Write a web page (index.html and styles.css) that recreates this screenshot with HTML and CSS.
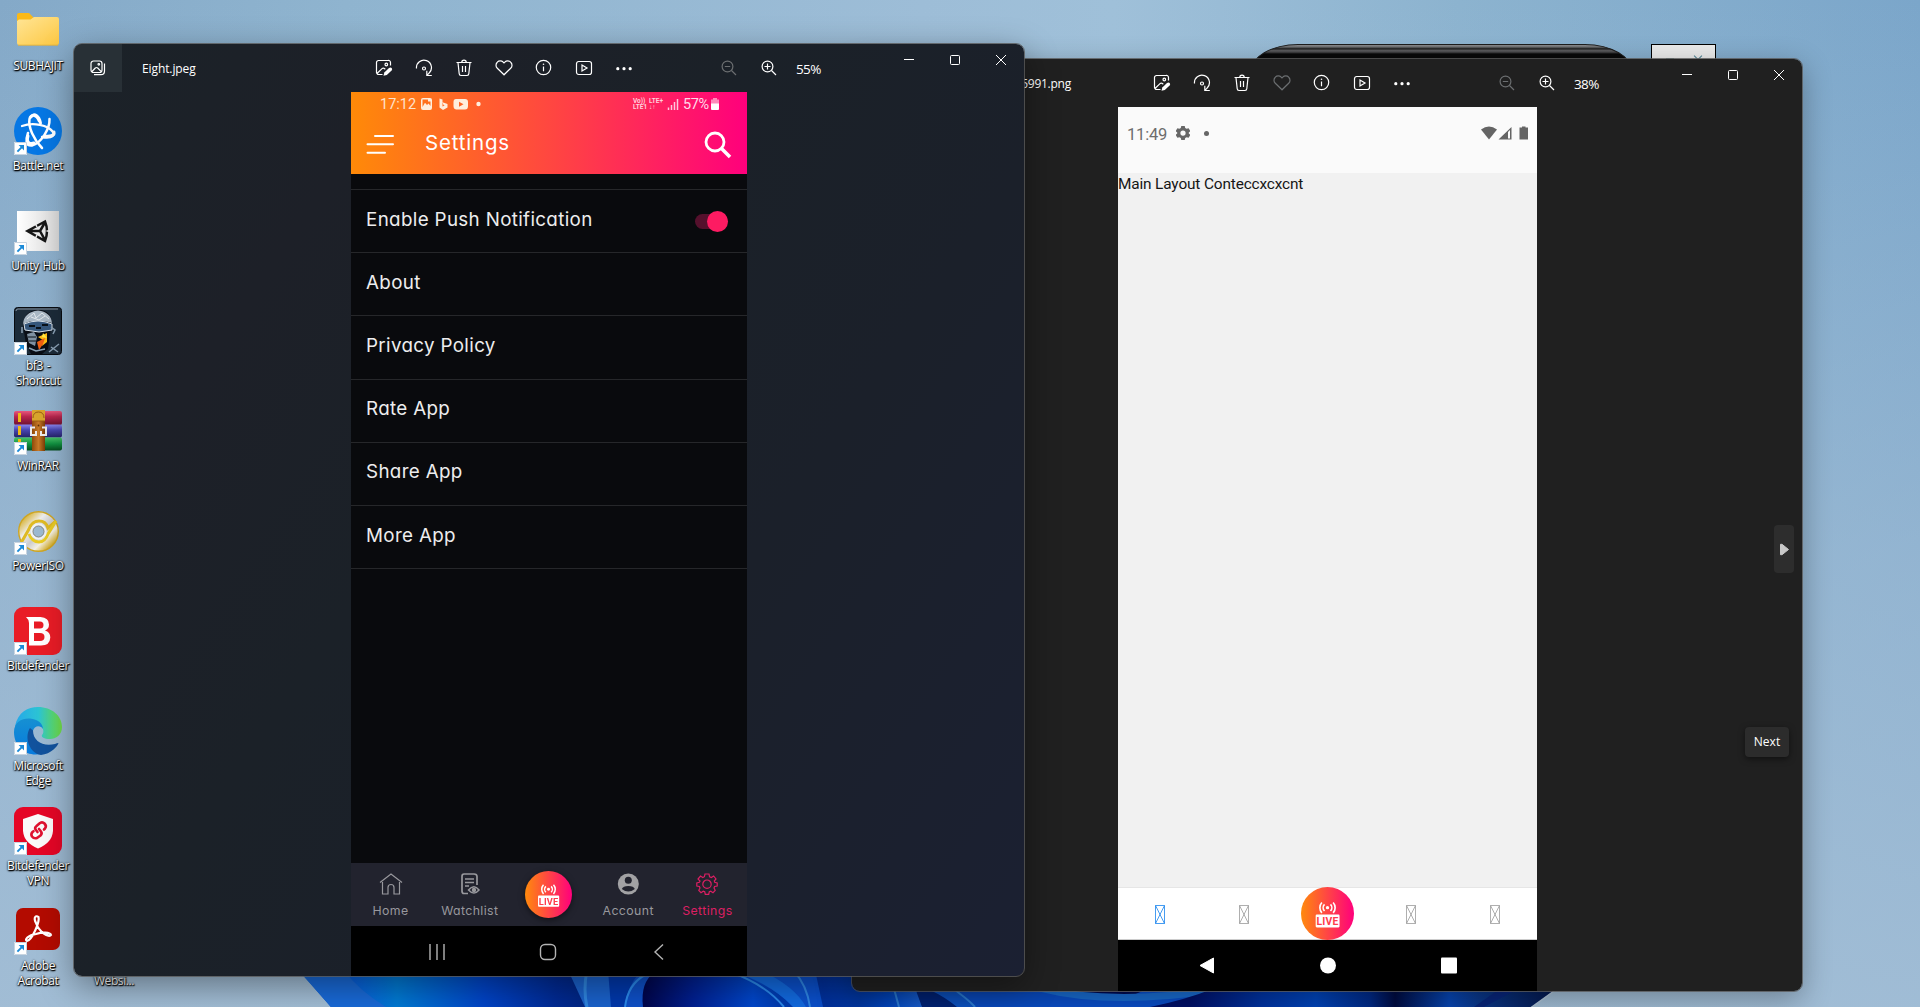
FILE: index.html
```html
<!DOCTYPE html>
<html lang="en">
<head>
<meta charset="utf-8">
<title>Desktop</title>
<link rel="stylesheet" href="styles.css">
</head>
<body>
<svg class="defs" width="0" height="0" aria-hidden="true">
  <defs>
    <linearGradient id="hot" x1="0" x2="1" y1="0" y2="0"><stop offset="0" stop-color="#ff8a0c"/><stop offset=".5" stop-color="#ff4545"/><stop offset="1" stop-color="#ff007c"/></linearGradient>
    <symbol id="shortcut" viewBox="0 0 13 13"><path d="M0 0h13v13H0z" fill="#fff"/><path d="M.5.5h12v12H.5z" fill="none" stroke="#c8d4e0"/><path d="M3.4 9.6 8.6 4.4" stroke="#1b8ad8" stroke-width="2"/><path d="M4.6 3h5.4v5.4L8.2 6.6 6.4 4.8z" fill="#1b8ad8"/></symbol>
    <symbol id="edit" viewBox="0 0 18 18"><path d="M7.5 15.5H4A2.2 2.2 0 0 1 1.500 13.500V3.500A2 2 0 0 1 3.500 1.500H13A2 2 0 0 1 15.500 3.500V6.500M2 14.500 7 9.600Q8.200 8.600 9.500 9.600L10.300 10.300"/><circle cx="11.300" cy="5.500" r="1.300"/><path d="M8.500 16.700 9.300 13.600 14 9Q15.500 7.800 16.700 9Q17.700 10.300 16.600 11.500L11.800 16.100z" fill="currentColor" stroke="none"/></symbol>
    <symbol id="rotate" viewBox="0 0 18 18"><path d="M1.500 9.500A7.500 7.500 0 1 1 14 14.200L12 16.300M11.800 11.700V16.500H16.800"/><circle cx="9" cy="9.500" r="1.500"/></symbol>
    <symbol id="trash" viewBox="0 0 18 18"><path d="M1.500 3.500H16.500M6.800 3.300A2.200 2.200 0 0 1 11.200 3.300M3 3.800 4.200 14.800A1.800 1.800 0 0 0 6 16.500H12A1.800 1.800 0 0 0 13.800 14.800L15 3.800M7.500 7V13M10.500 7V13"/></symbol>
    <symbol id="heart" viewBox="0 0 18 18"><path d="M9 15.800 2.300 9.200A4.100 4.100 0 0 1 2.300 3.200A4.100 4.100 0 0 1 8.200 3.200L9 4 9.800 3.200A4.100 4.100 0 0 1 15.700 3.200A4.100 4.100 0 0 1 15.700 9.200z"/></symbol>
    <symbol id="info" viewBox="0 0 18 18"><circle cx="8.500" cy="8.500" r="7.200"/><path d="M8.500 7.500V12.200"/><circle cx="8.500" cy="5.200" r=".8" fill="currentColor" stroke="none"/></symbol>
    <symbol id="play" viewBox="0 0 18 18"><rect x="1.500" y="2.500" width="15" height="13" rx="2.200"/><path d="M7 6V12L12 9z"/></symbol>
    <symbol id="more" viewBox="0 0 18 18"><g fill="currentColor" stroke="none"><circle cx="2.800" cy="9.700" r="1.600"/><circle cx="9" cy="9.700" r="1.600"/><circle cx="15.200" cy="9.700" r="1.600"/></g></symbol>
    <symbol id="zoomout" viewBox="0 0 18 18"><circle cx="7.500" cy="7.500" r="5.400"/><path d="M11.500 11.500 16 16M4.800 7.500H10.200"/></symbol>
    <symbol id="zoomin" viewBox="0 0 18 18"><circle cx="7.500" cy="7.500" r="5.400"/><path d="M11.500 11.500 16 16M4.500 7.500H10.500M7.500 4.500V10.500"/></symbol>
    <symbol id="min" viewBox="0 0 12 12"><path d="M1 5.500H11"/></symbol>
    <symbol id="max" viewBox="0 0 12 12"><rect x="1.500" y="1.500" width="9" height="9" rx="1"/></symbol>
    <symbol id="close" viewBox="0 0 12 12"><path d="M1 1 11 11M11 1 1 11"/></symbol>
    <symbol id="live" viewBox="0 0 48 48"><circle cx="24" cy="24" r="24" fill="url(#hot)"/><g fill="none" stroke="#fff" stroke-width="1.500"><path d="M21.300 15.700A4.300 4.300 0 0 0 21.300 21.700M26.700 15.700A4.300 4.300 0 0 1 26.700 21.700M18.900 14A7 7 0 0 0 18.900 23.400M29.100 14A7 7 0 0 1 29.100 23.400"/></g><circle cx="24" cy="18.700" r="1.500" fill="#fff"/><rect x="13.300" y="25" width="21.600" height="11.600" rx="1" fill="#fff"/><text x="24.100" y="34.300" class="live-word">LIVE</text></symbol>
    <symbol id="tofu" viewBox="0 0 10 19"><path d="M.5.500H9.500V18.500H.5zM.5.500 9.500 18.500M9.500.500.500 18.500"/></symbol>
  </defs>
</svg>

<svg class="wallpaper" viewBox="0 970 1920 37" aria-hidden="true">
  <defs>
    <linearGradient id="w1" gradientUnits="userSpaceOnUse" x1="310" x2="600" y1="0" y2="0"><stop offset="0" stop-color="#1f70dc"/><stop offset=".15" stop-color="#0860dc"/><stop offset=".3" stop-color="#007ad4"/><stop offset=".6" stop-color="#0044c8"/><stop offset=".85" stop-color="#002a94"/><stop offset="1" stop-color="#00247c"/></linearGradient>
    <linearGradient id="w2" gradientUnits="userSpaceOnUse" x1="645" x2="780" y1="0" y2="0"><stop offset="0" stop-color="#00064e"/><stop offset=".35" stop-color="#001f90"/><stop offset=".8" stop-color="#0047cc"/><stop offset="1" stop-color="#003bb0"/></linearGradient>
    <linearGradient id="w3" gradientUnits="userSpaceOnUse" x1="815" x2="925" y1="0" y2="0"><stop offset="0" stop-color="#002e98"/><stop offset=".4" stop-color="#0039a8"/><stop offset=".65" stop-color="#0048c8"/><stop offset="1" stop-color="#1b66dc"/></linearGradient>
    <linearGradient id="w4" gradientUnits="userSpaceOnUse" x1="1190" x2="1550" y1="0" y2="0"><stop offset="0" stop-color="#001068"/><stop offset=".2" stop-color="#0034a4"/><stop offset=".35" stop-color="#0045bc"/><stop offset=".5" stop-color="#002a88"/><stop offset=".57" stop-color="#000c42"/><stop offset=".72" stop-color="#0746b4"/><stop offset=".8" stop-color="#0a388c"/><stop offset="1" stop-color="#041a50"/></linearGradient>
  </defs>
  <path d="M298 970 304 976 331 1007H1532L1553 991V970z" fill="#0a4fcb"/>
  <path d="M298 970 331 1007H620V970z" fill="url(#w1)"/>
  <path d="M298 970 304 976 331 1007H386Q358 990 344 970z" fill="#196ad8"/>
  <path d="M568 970 585 1007H625V970z" fill="#1a62cc"/>
  <path d="M587 970Q583 990 587 1007" fill="none" stroke="#2f86e0" stroke-width="3"/>
  <path d="M608 970 611 1007H632L648 970z" fill="#0038ac"/>
  <path d="M625 1007Q628 976 660 970H725Q765 980 795 1007z" fill="url(#w2)"/>
  <path d="M643 1007Q640 982 655 972H640Q626 988 625 1007z" fill="#0e50c8"/>
  <path d="M625 1007Q628 984 645 975" fill="none" stroke="#2b8aec" stroke-width="2"/>
  <path d="M728 970Q770 982 793 1007H808Q790 982 765 970z" fill="#126ae0"/>
  <path d="M730 972Q765 984 784 1007" fill="none" stroke="#2b8aec" stroke-width="2"/>
  <path d="M760 970Q795 986 806 1007H818Q815 980 810 970z" fill="#0b50cc"/>
  <path d="M793 970Q807 985 810 1007" fill="none" stroke="#2f86e4" stroke-width="2"/>
  <path d="M815 970 823 1007H933L915 970z" fill="url(#w3)"/>
  <path d="M893 985 899 1007" stroke="#2f86e4" stroke-width="2"/>
  <path d="M914 985 922 1007H974Q962 993 948 985z" fill="#00257e"/>
  <path d="M930 990Q945 997 957 1007H976Q964 995 952 988z" fill="#0d58cf"/>
  <path d="M948 985Q968 999 975 1007" fill="none" stroke="#2f86e4" stroke-width="2"/>
  <path d="M1060 985Q1080 998 1115 998Q1140 996 1150 985z" fill="#000a50"/>
  <path d="M1040 988Q1110 1006 1215 990" fill="none" stroke="#196dd2" stroke-width="7"/>
  <path d="M1150 1007Q1185 1000 1215 988H1553V991L1532 1007z" fill="url(#w4)"/>
  <path d="M1484 1007 1520 988H1501L1474 1007z" fill="#08267c"/>
  <path d="M1531 1007.500 1554 991" stroke="#b2c6d8" stroke-width="1.500"/>
</svg>

<div class="mock-phone"></div>
<div class="mock-note"><span></span><i></i></div>

<nav class="icons">
  <div class="cell"><svg viewBox="0 0 48 48"><defs><linearGradient id="fo" x2="1" y2="1"><stop stop-color="#ffe596"/><stop offset="1" stop-color="#fdc842"/></linearGradient></defs><path d="M3 8Q3 6 5 6H15L19 10V17H3z" fill="#fbb917"/><path d="M5 12.500H16.500L20 10H43Q45 10 45 12V36Q45 38 43 38H5Q3 38 3 36V14z" fill="url(#fo)"/><path d="M4 38.200H44" stroke="#e6b43c"/></svg><p>SUBHAJIT</p></div>
  <div class="cell"><svg viewBox="0 0 48 48"><circle cx="24" cy="24" r="24" fill="#0677e4"/><g fill="none" stroke="#fff" stroke-linecap="round"><path d="M28 41C20 33 14 20 15.500 12C16.500 7 22 7 25 14" stroke-width="2.500"/><path d="M17 10C20 5 25 9 26.500 16" stroke-width="3"/><path d="M8 19C19 15 34 18 39 25C42 31 33 31 28 30" stroke-width="2.300"/><path d="M40 25C41 29 35 29.500 31 29" stroke-width="3"/><path d="M35.500 12C36 22 27 36 18 38.500C11 39 12 32 14 26" stroke-width="2.500"/><path d="M14 29C12 36 16 37.500 20 36" stroke-width="3"/></g><use href="#shortcut" y="35" width="13" height="13"/></svg><p>Battle.net</p></div>
  <div class="cell"><svg viewBox="0 0 48 48"><defs><linearGradient id="un"><stop stop-color="#fff"/><stop offset="1" stop-color="#d8d8d8"/></linearGradient></defs><path d="M3 4H45V44H3z" fill="url(#un)"/><path d="M31 14.500 13.500 24 31 34Q35 24 31 14.500zM14 24H26M26 24 31.500 14.500M26 24 31.500 34" fill="none" stroke="#161616" stroke-width="2.500"/><path d="M21 16 23 20M21 32 23 28M32.500 24H36" stroke="#eee" stroke-width="1.500"/><use href="#shortcut" y="35" width="13" height="13"/></svg><p>Unity Hub</p></div>
  <div class="cell"><svg viewBox="0 0 48 48"><rect x=".5" y=".5" width="47" height="47" rx="3" fill="#1c2b39" stroke="#080b10"/><path d="M2 4Q2 2 4 2H44" stroke="#8794a2" fill="none"/><path d="M9 19Q10 3 24 3Q38 3 38 18L36 27 34 42 28 47H17L12 37 10 25z" fill="#090d15"/><path d="M9 17Q10 5 24 3.500Q37 5 38 16L30 14H17z" fill="#a9b7c4"/><path d="M13 12 20 6 22 11 28 6 35 12M17 10 25 13 31 9" fill="none" stroke="#e3e8ed"/><path d="M10 17Q24 11 38 17V23L25 25 11 23z" fill="#35567b" stroke="#d5dfe9"/><path d="M15 19H21M28 18H34M22 21H27" stroke="#0a1119" stroke-width="2"/><path d="M13 27 20 25 23 30 21 39 15 36z" fill="#7f91a2"/><path d="M14 30H22M15 34H22M17 40H28" stroke="#0b1119"/><path d="M24 30 33 26 33 35 28 39 29 33z" fill="#ffbc15"/><path d="M23 35 31 31 29 37 25 43z" fill="#f05e12"/><path d="M29 26 33 31 28 30z" fill="#ffed47"/><path d="M8 20V26M37 20 41 23 39 27M15 41 22 44 31 42M35 45 45 37M37 40 44 45" stroke="#8aa0b4" stroke-width="1.500" fill="none"/><use href="#shortcut" y="35" width="13" height="13"/></svg><p>bf3 -<br>Shortcut</p></div>
  <div class="cell"><svg viewBox="0 0 48 48"><defs><linearGradient id="r1" x2="0" y2="1"><stop stop-color="#e8577c"/><stop offset=".4" stop-color="#b8264e"/><stop offset="1" stop-color="#6e1230"/></linearGradient><linearGradient id="r2" x2="0" y2="1"><stop stop-color="#8c86ee"/><stop offset=".4" stop-color="#4a48b4"/><stop offset="1" stop-color="#252268"/></linearGradient><linearGradient id="r3" x2="0" y2="1"><stop stop-color="#46c266"/><stop offset=".5" stop-color="#109040"/><stop offset="1" stop-color="#064c1e"/></linearGradient><linearGradient id="r4"><stop stop-color="#8f4a0a"/><stop offset=".5" stop-color="#c87a28"/><stop offset="1" stop-color="#7c3c06"/></linearGradient></defs><rect y="4" width="48" height="14" rx="2" fill="url(#r1)"/><rect y="17.500" width="48" height="13" rx="2" fill="url(#r2)"/><rect y="30.500" width="48" height="13" rx="2" fill="url(#r3)"/><path d="M4 6H7V15H4zM4 19H7V28H4zM4 32H7V35H4z" fill="#eeb913"/><path d="M18 3H31V44H18z" fill="url(#r4)"/><path d="M18 14V3H31V14z" fill="#d9a52c"/><path d="M19 11Q19 5 24.500 5Q30 5 30 11M18 14H31" fill="none" stroke="#9a5b14"/><path d="M21 20.500H17V28H22V24M28 20.500H32V28H27V24" fill="none" stroke="#ececec" stroke-width="2"/><circle cx="24.500" cy="18.500" r=".9" fill="#5a2c05"/><use href="#shortcut" y="35" width="13" height="13"/></svg><p>WinRAR</p></div>
  <div class="cell"><svg viewBox="0 0 48 48"><defs><linearGradient id="cd" x2="1" y2="1"><stop stop-color="#d9b53b"/><stop offset=".3" stop-color="#eee"/><stop offset=".55" stop-color="#ccc"/><stop offset=".75" stop-color="#f4f0e4"/><stop offset="1" stop-color="#d0a81e"/></linearGradient></defs><circle cx="24.500" cy="24.500" r="14" fill="none" stroke="url(#cd)" stroke-width="12"/><circle cx="24.500" cy="24.500" r="19.800" fill="none" stroke="#cda524" stroke-width="1.400"/><path d="M7 36 15 22Q18 14 25 14Q32 14 34 21L42 14" fill="none" stroke="#dfba23" stroke-width="3"/><path d="M15 27Q18 35 25 35Q31 35 34 27L42 14" fill="none" stroke="#e9cb23" stroke-width="3"/><circle cx="24.500" cy="24.500" r="7" fill="none" stroke="#f2f3f3" stroke-width="2.500"/><circle cx="24.500" cy="24.500" r="5.500" fill="#9cb9d1" stroke="#8b8b86"/><use href="#shortcut" y="35" width="13" height="13"/></svg><p>PowerISO</p></div>
  <div class="cell"><svg viewBox="0 0 48 48"><rect width="48" height="48" rx="9" fill="#e91c26"/><path fill="#fff" fill-rule="evenodd" d="M12 10H26.500Q35 10.500 35 17.500Q35 22 31 23.600Q36.300 25 36.300 30.500Q36 38.500 27 38.500H15V16Q14.500 12 12 10zM20 14.500V21.500H26Q29.500 21.500 29.500 18Q29.500 14.500 26 14.500zM20 26V34H26Q30.500 34 30.500 30Q30.500 26 26 26z"/><use href="#shortcut" y="35" width="13" height="13"/></svg><p>Bitdefender</p></div>
  <div class="cell"><svg viewBox="0 0 48 48"><defs><linearGradient id="e1"><stop stop-color="#24a7ea"/><stop offset=".5" stop-color="#2cc4d4"/><stop offset=".8" stop-color="#55d778"/><stop offset="1" stop-color="#72dc45"/></linearGradient><linearGradient id="e2" x2="0" y2="1"><stop stop-color="#1690d2"/><stop offset="1" stop-color="#067ade"/></linearGradient></defs><path d="M1 19C4 5 14 0 24 0C38 0 48 9 48 20C48 28 42 32 36 32C30 32 27 30 28 28C31 25 29 19 24 18z" fill="url(#e1)"/><path d="M0 25C0 15 8 11 16 11.500C24 12 29 17 29 22C27 18 20 18 19 24C17 32 24 45 34 44C19 53 0 44 0 25z" fill="url(#e2)"/><path d="M16 21C10 30 15 46 27 48C37 47 44 39 44.500 36Q43 36 41 37C29 40 19 34 19 23.500z" fill="#11529d"/><use href="#shortcut" y="35" width="13" height="13"/></svg><p>Microsoft<br>Edge</p></div>
  <div class="cell"><svg viewBox="0 0 48 48"><rect width="48" height="48" rx="9" fill="#e50626"/><path d="M24 7 39 12V24Q38 36 24 41.500Q10 36 9 24V12z" fill="#fafafa"/><g fill="none" stroke="#df1230" stroke-width="2.600" stroke-linecap="round" stroke-linejoin="round"><path d="M23.500 25 21.500 22.500Q20.500 20.500 22.500 19L26 16Q28.500 14.500 30.500 16.500Q33 19 31 21.500L30 22.500"/><path d="M25 22 27 24.500Q28.500 26.500 26.500 28.500L23 31Q20 32 18 29.500Q16.500 27 18.500 25L19.500 24.200"/></g><use href="#shortcut" y="35" width="13" height="13"/></svg><p>Bitdefender<br>VPN</p></div>
  <div class="cell"><svg viewBox="0 0 48 48"><rect x="2" y="1" width="44" height="42" rx="7" fill="#b30b00"/><path d="M22 16C19 10 22 8 24.500 10C26 15 18 33 13 34C10 33 14 28 22 27C28 25 36 25 37 28C35 31 25 25 22 16z" fill="none" stroke="#fff" stroke-width="2.200"/><use href="#shortcut" y="35" width="13" height="13"/></svg><p>Adobe<br>Acrobat</p></div>
</nav>
<p class="stray">Websi...</p>

<section class="window back">
  <header class="titlebar">
    <span class="home"></span><span class="name">5991.png</span>
    <div class="tools"><svg><use href="#edit"/></svg><svg><use href="#rotate"/></svg><svg><use href="#trash"/></svg><svg class="off"><use href="#heart"/></svg><svg><use href="#info"/></svg><svg><use href="#play"/></svg><svg><use href="#more"/></svg></div>
    <div class="zooms"><svg class="off"><use href="#zoomout"/></svg><svg><use href="#zoomin"/></svg><span>38%</span></div>
    <div class="controls"><svg><use href="#min"/></svg><svg><use href="#max"/></svg><svg><use href="#close"/></svg></div>
  </header>
  <main class="phone android">
    <div class="status"><time>11:49</time>
      <svg class="gear" width="14" height="14" viewBox="0 0 24 24" fill="#666"><path fill-rule="evenodd" d="M9 0h6l.8 3.500 2.400 1.400 3.400-1.100 3 5-2.700 2.400v1.600l2.700 2.400-3 5-3.400-1.100-2.400 1.400L15 24H9l-.8-3.500-2.400-1.400-3.400 1.100-3-5 2.700-2.400v-1.600L-.6 8.800l3-5 3.400 1.100 2.400-1.400zM12 7.500a4.500 4.500 0 1 0 0 9 4.500 4.500 0 0 0 0-9z"/></svg><i class="dot"></i>
      <svg class="signals" width="48" height="14" viewBox="0 0 48 14" fill="#646464"><path d="M0 3.500Q8-2.500 16 3.500L8 13.500z"/><path d="M17.500 13.500 30.500 1V13.500zM27 6V12.500H29V4z" fill-rule="evenodd"/><path d="M38.500 1.500H41V.5H44.500V1.500H47V13.500H38.500z"/></svg>
    </div>
    <div class="content">Main Layout Conteccxcxcnt</div>
    <div class="tabs"><svg class="tofu on"><use href="#tofu"/></svg><svg class="tofu"><use href="#tofu"/></svg><svg class="live"><use href="#live"/></svg><svg class="tofu"><use href="#tofu"/></svg><svg class="tofu"><use href="#tofu"/></svg></div>
    <div class="sysnav"><svg viewBox="0 0 16 17"><path d="M14.500 1V16L1 8.500z" fill="#fff" stroke="#fff" stroke-linejoin="round"/></svg><svg viewBox="0 0 16 17"><circle cx="8" cy="8.500" r="8" fill="#fff"/></svg><svg viewBox="0 0 16 17"><rect y=".5" width="16" height="16" rx="1" fill="#fff"/></svg></div>
  </main>
  <div class="next"><svg width="11" height="13" viewBox="0 0 11 13"><path d="M1.500 1.300V11.700H3L9.500 6.500 3 1.300z" fill="#c8c8c8" stroke="#c8c8c8" stroke-linejoin="round"/></svg></div>
  <div class="tip">Next</div>
</section>

<section class="window front">
  <header class="titlebar">
    <span class="home"><svg width="18" height="18" viewBox="0 0 18 18"><rect x="2" y="2" width="11" height="11.500" rx="2.500"/><path d="M3 12.500 6.300 9Q7.500 8 8.700 9L12.500 12.800M15.500 4.500V12Q15.500 15.700 12 15.700H5"/><circle cx="9.800" cy="5.300" r=".8"/></svg></span><span class="name">Eight.jpeg</span>
    <div class="tools"><svg><use href="#edit"/></svg><svg><use href="#rotate"/></svg><svg><use href="#trash"/></svg><svg><use href="#heart"/></svg><svg><use href="#info"/></svg><svg><use href="#play"/></svg><svg><use href="#more"/></svg></div>
    <div class="zooms"><svg class="off"><use href="#zoomout"/></svg><svg><use href="#zoomin"/></svg><span>55%</span></div>
    <div class="controls"><svg><use href="#min"/></svg><svg><use href="#max"/></svg><svg><use href="#close"/></svg></div>
  </header>
  <main class="phone app">
    <div class="hero">
      <div class="status"><time>17:12</time>
        <svg width="64" height="14" viewBox="0 0 64 14"><path fill="#ffeede" fill-rule="evenodd" d="M4 1H11Q13 1 13 3V11Q13 13 11 13H4Q2 13 2 11V3Q2 1 4 1zM3.500 10 6 5.800 8 8 9.500 6.500 11.500 9V4.500H9V2.500H3.500zM20.500 1.500V10.500L24 13 28.500 10.500V7L23.500 5.300 24.500 8 25.700 8.500 23.500 9.500V2.500zM37 2H46Q49 2 49 5V9Q49 12.500 46 12.500H37Q34.500 12 34.500 9V5Q34.500 2 37 2zM40 4.700V9.700L44.500 7.200z"/><circle cx="59.500" cy="7" r="2.200" fill="#ffeede"/></svg>
        <span class="lte"><b>Vo))</b><b>LTE+</b><b>LTE1</b><b>&#8595;&#8593;</b></span>
        <svg class="bars" width="12" height="12" viewBox="0 0 12 12"><path d="M1.500 9.500V12M4.500 7V12M7.500 4V12M10.500 1V12" stroke="#ffc8dc" stroke-width="1.500"/></svg>
        <span class="pct">57%</span>
        <svg class="batt" width="8" height="12" viewBox="0 0 8 12"><path d="M2 0H6V1.500H8V6H0V1.500H2z" fill="#ff8abb"/><path d="M0 5.500H8V11Q8 12 7 12H1Q0 12 0 11z" fill="#fff"/></svg>
      </div>
      <div class="appbar"><svg class="menu" width="28" height="22" viewBox="0 0 28 22"><path d="M9 3H27M1.500 11.300H27M1.500 19.700H19" stroke="#fff" stroke-width="2" stroke-linecap="round"/></svg><h1>Settings</h1><svg class="search" width="28" height="28" viewBox="0 0 28 28"><circle cx="11" cy="11" r="9" fill="none" stroke="#fff" stroke-width="2.800"/><path d="M17.500 17.500 26 26" stroke="#fff" stroke-width="3.600"/></svg></div>
    </div>
    <ul><li>Enable Push Notification<span class="toggle"><i></i></span></li><li>About</li><li>Privacy Policy</li><li>Rate App</li><li>Share App</li><li>More App</li></ul>
    <div class="tabs">
      <div><svg width="24" height="22" viewBox="0 0 24 22"><path d="M1 9.500 12 1 23 9.500M3.500 9V21H9V14.500A3 3 0 0 1 15 14.500V21H20.500V9"/></svg>Home</div>
      <div><svg width="22" height="22" viewBox="0 0 22 22"><path d="M9 20.500H5Q3 20.500 3 18V3.500Q3 1 5 1H15Q18 1 18 3.500V12" stroke-width="1.700"/><path d="M6 6H15M6 9.500H15M6 13H10" stroke-width="1.500"/><path d="M9.500 17Q15 10.500 20 17Q15 23 9.500 17z" fill="#22232e" stroke-width="1.500"/><circle cx="15" cy="17" r="1.600" fill="#999"/></svg>Watchlist</div>
      <div class="center"><svg class="live"><use href="#live"/></svg></div>
      <div><svg width="22" height="22" viewBox="0 0 22 22"><circle cx="11.300" cy="11" r="10.500" fill="#a2a2a4" stroke="none"/><circle cx="11.300" cy="7.300" r="3.500" fill="#22232e" stroke="none"/><path d="M4.800 16Q6 13 11.300 13Q16.800 13 17.800 16Q11.300 21 4.800 16z" fill="#22232e" stroke="none"/></svg>Account</div>
      <div class="on"><svg width="22" height="22" viewBox="0 0 22 22"><path d="M9 1H13L13.600 3.700 15.400 4.500 17.600 3 20 6 18.300 8 18.700 9.300 21.200 10V13L18.600 13.500 18 15 19.200 17.300 17 19.700 14.800 18.200 13.300 18.800 12.700 21.300H9.300L8.700 18.800 7.200 18.200 5 19.700 2.800 17.300 4 15 3.400 13.500.8 13V10L3.300 9.300 4 8 2 6 4.500 3 6.800 4.500 8.400 3.700z"/><circle cx="11" cy="11.200" r="4.200"/></svg>Settings</div>
    </div>
    <div class="sysnav"><svg viewBox="0 0 18 18"><path d="M2 1V17M9 1V17M16 1V17"/></svg><svg viewBox="0 0 18 18"><rect x="1.500" y="1.500" width="15" height="15" rx="4.500"/></svg><svg viewBox="0 0 18 18"><path d="M13 1.500 5 9 13 16.500"/></svg></div>
  </main>
</section>
</body>
</html>
```

FILE: styles.css
```css
* { box-sizing: border-box; }
body {
  margin: 0; width: 1920px; height: 1007px; position: relative; overflow: hidden;
  font-family: "Open Sans", "Noto Sans", sans-serif; color: #fff;
  background:
    linear-gradient(180deg, rgba(166,192,215,0) 0%, rgba(166,192,215,.55) 55%, rgba(166,192,215,.85) 100%),
    linear-gradient(90deg, #84a9c8 0%, #8fb4cf 18%, #9dbdd7 48%, #9fc0d9 58%, #8cb3cf 76%, #7ba6ca 100%);
}
p, h1, ul { margin: 0; padding: 0; }
.defs { position: absolute; }
.live-word { font: 700 9.400px "Roboto", sans-serif; fill: #ff3c4c; text-anchor: middle; letter-spacing: .2px; }

.wallpaper { position: absolute; left: 0; top: 970px; width: 1920px; height: 37px; }
.mock-phone {
  position: absolute; left: 1250px; top: 44px; width: 383px; height: 60px;
  border-radius: 48px 48px 0 0 / 28px 28px 0 0; border: 1px solid #1d1d1d;
  background: linear-gradient(180deg, #8b8c8e 0, #6a6b6d 2px, #161616 4px, #5d5d5f 5px, #4a4a4c 7px, #080808 9px);
}
.mock-note {
  position: absolute; left: 1651px; top: 44px; width: 65px; height: 40px; padding: 10px 14px;
  border: 1px solid #000; background: #ebebeb; display: flex; justify-content: space-between;
}
.mock-note span { width: 8px; height: 2px; margin-top: 3px; background: #8aa; }
.mock-note i { width: 6px; height: 6px; border-bottom: 1px solid #4b8294; border-right: 1px solid #4b8294; transform: translateY(-2px) rotate(45deg); }

.icons { position: absolute; left: 0; top: 7px; width: 76px; display: grid; grid-auto-rows: 100px; }
.cell { display: flex; flex-direction: column; align-items: center; }
.cell svg { width: 48px; height: 48px; flex: none; }
.cell p { margin-top: 3px; }
.cell p, .stray {
  font-size: 12px; line-height: 15px; text-align: center; white-space: nowrap; letter-spacing: -.4px; word-spacing: 1px; font-weight: 500;
  text-shadow: 1px 1px 1px #000, 0 1px 2px #000, 0 0 2px rgba(0,0,0,.7);
}
.stray { position: absolute; left: 76px; top: 973px; width: 76px; }

.window { position: absolute; width: 950px; height: 932px; border-radius: 8px; overflow: hidden; outline: 1px solid rgba(90,90,90,.8); }
.back { left: 852px; top: 59px; background: #202020; box-shadow: 0 8px 30px rgba(0,0,0,.32); }
.front {
  left: 74px; top: 44px; box-shadow: 0 10px 34px rgba(0,0,0,.4);
  background: linear-gradient(125deg, #1b2228 0%, #1d2028 22%, #1b2128 42%, #1b202a 65%, #1b2032 100%);
}
.titlebar { display: flex; height: 48px; align-items: flex-start; }
.home { width: 48px; height: 48px; display: grid; place-items: center; }
.front .home { background: #283036; }
.home svg, .titlebar svg { fill: none; stroke: currentColor; stroke-width: 1.200; }
.name { font-size: 12px; line-height: 16px; margin: 17px 0 0 20px; width: 222px; white-space: nowrap; font-weight: 500; letter-spacing: -.1px; }
.back .name { width: 151px; margin-right: 71px; text-align: right; letter-spacing: -.25px; }
.tools, .zooms { display: flex; height: 48px; align-items: center; }
.tools svg, .zooms svg { width: 18px; height: 18px; margin: 0 11px; }
.zooms { margin-left: 65px; width: 177px; }
.zooms span { font-size: 13.500px; margin: 2px 0 0 7px; letter-spacing: -.6px; font-weight: 500; }
.off { color: #6b6e70; }
.controls { display: flex; }
.controls svg { width: 12px; height: 12px; margin: 10px 17px; stroke-width: 1; }

.phone { display: flex; flex-direction: column; height: 884px; }
.app { width: 396px; margin-left: 277px; background: #090a0d; font-family: "Inter", sans-serif; font-feature-settings: "cv11"; }
.hero { height: 82px; background: linear-gradient(90deg, #ff8a08, #ff4740 50%, #ff007c); }
.hero .status { display: flex; align-items: center; height: 24px; padding: 0 28px 0 29px; font-family: "Roboto", sans-serif; font-size: 14.500px; color: #ffe2cc; }
.status time { width: 39px; }
.lte { display: grid; grid-template-columns: 16px 15px; width: 31px; margin: 0 3px 0 auto; font-size: 6.500px; line-height: 6px; color: #ffd0dc; white-space: nowrap; }
.lte b { font-weight: 700; }
.bars { margin: 0 4px 0 0; }
.pct { letter-spacing: -.4px; color: #ffd9e8; width: 28px; }
.appbar { display: flex; align-items: center; padding: 0 15px 0 15px; height: 54px; }
.menu { margin-top: 2px; }
.search { margin-top: 3px; }
h1 { font-size: 20.500px; font-weight: 400; flex: 1; margin: -1px 0 0 31px; letter-spacing: .8px; }
.app ul { list-style: none; margin-top: 15px; flex: 1; border-top: 1px solid #26272a; }
.app li { display: flex; justify-content: space-between; align-items: center; height: 63.200px; padding: 0 19px 4px 15px; border-bottom: 1px solid #26272a; font-size: 18.800px; letter-spacing: .34px; color: #ededee; }
.toggle { width: 33px; height: 15px; border-radius: 8px; background: #55102c; display: flex; justify-content: flex-end; align-items: center; margin-top: 4px; }
.toggle i { width: 21px; height: 21px; flex: none; border-radius: 50%; background: #fd1b62; }
.app .tabs { height: 63px; background: #22232e; display: grid; grid-template-columns: repeat(5, 1fr); color: #98989d; font-size: 12.300px; letter-spacing: .4px; }
.app .tabs div { display: flex; flex-direction: column; align-items: center; gap: 8px; padding-top: 10px; line-height: 16px; }
.app .tabs svg { fill: none; stroke: currentColor; stroke-width: 1.200; flex: none; }
.app .tabs .center { padding-top: 8px; }
.app .tabs .live { width: 47px; height: 47px; stroke: none; filter: drop-shadow(0 2px 3px rgba(0,0,0,.5)); }
.app .tabs .on { color: #dc1f63; }
.sysnav { background: #000; display: flex; justify-content: center; align-items: center; }
.app .sysnav { height: 50px; gap: 93px; padding: 1px 3px 0 0; }
.app .sysnav svg { width: 18px; height: 18px; fill: none; stroke: #b4b4b4; stroke-width: 1.400; }

.android { width: 419px; margin-left: 266px; font-family: "Roboto", sans-serif; color: #151515; background: #f1f1f1; }
.android .status { height: 66px; background: #fafafa; display: flex; padding: 19px 8px 0 9px; font-size: 16.500px; line-height: 17px; color: #6d6d6d; letter-spacing: -.2px; }
.android time { width: 49px; }
.dot { width: 5px; height: 5px; border-radius: 50%; background: #666; margin: 5px 0 0 14px; }
.signals { margin-left: auto; }
.content { flex: 1; font-size: 15.400px; line-height: 18px; padding-top: 2px; letter-spacing: -.15px; }
.android .tabs { height: 53px; background: #fff; border-top: 1px solid #e6e6e6; border-bottom: 1px solid #ccc; display: grid; grid-template: 51px / repeat(5, 1fr); place-items: center; }
.tofu { width: 10px; height: 19px; fill: none; stroke: #9a9a9a; stroke-width: .8; margin-top: 1px; }
.tofu.on { stroke: #1683ee; }
.android .live { width: 53px; height: 53px; }
.android .sysnav { height: 51px; gap: 105px; }
.android .sysnav svg { width: 16px; height: 17px; }

.next { position: absolute; left: 922px; top: 466px; width: 20px; height: 48px; border-radius: 4px; background: #2d2d2d; display: grid; place-items: center; }
.tip { position: absolute; left: 893px; top: 668px; width: 44px; height: 30px; border-radius: 4px; background: #2c2c2c; box-shadow: 0 2px 6px rgba(0,0,0,.5); text-align: center; font-size: 12px; font-weight: 500; line-height: 30px; }
```
